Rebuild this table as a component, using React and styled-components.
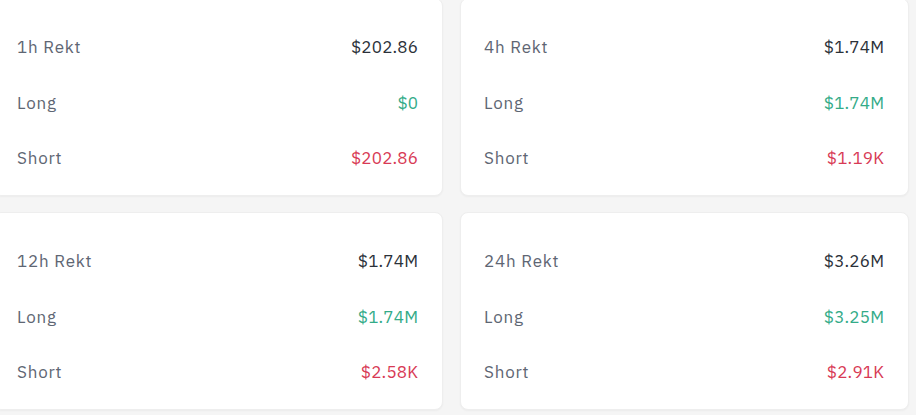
import React from "react";
import styled, { createGlobalStyle } from "styled-components";

const GlobalStyle = createGlobalStyle`
  html, body {
    margin: 0;
    padding: 0;
    background: #f5f5f5;
    font-family: "IBM Plex Sans", "Noto Sans", "Open Sans", Arial, sans-serif;
  }
`;

const stats = [
  { period: "1h", total: "$202.86", long: "$0", short: "$202.86" },
  { period: "4h", total: "$1.74M", long: "$1.74M", short: "$1.19K" },
  { period: "12h", total: "$1.74M", long: "$1.74M", short: "$2.58K" },
  { period: "24h", total: "$3.26M", long: "$3.25M", short: "$2.91K" },
];

export default function App() {
  return (
    <>
      <GlobalStyle />
      <Page>
        <Grid>
          {stats.map((s) => (
            <Card key={s.period}>
              <Row>
                <Label>{s.period} Rekt</Label>
                <Value>{s.total}</Value>
              </Row>
              <Row>
                <Label>Long</Label>
                <Value tone="up">{s.long}</Value>
              </Row>
              <Row>
                <Label>Short</Label>
                <Value tone="down">{s.short}</Value>
              </Row>
            </Card>
          ))}
        </Grid>
      </Page>
    </>
  );
}

const Page = styled.div`
  width: 916px;
  height: 415px;
  overflow: hidden;
  background: #f5f5f5;
`;

const Grid = styled.div`
  display: grid;
  grid-template-columns: 450px 449px;
  grid-auto-rows: 198px;
  column-gap: 17px;
  row-gap: 16px;
  margin: -2px 0 0 -7px;
`;

const Card = styled.div`
  box-sizing: border-box;
  display: flex;
  flex-direction: column;
  gap: 31.5px;
  padding: 36px 24px 27px 23px;
  background: #ffffff;
  border: 1px solid #eeeeee;
  border-radius: 8px;
  box-shadow: 0 1px 2px rgba(0, 0, 0, 0.04);
`;

const Row = styled.div`
  display: flex;
  justify-content: space-between;
  align-items: center;
  height: 24px;
  font-size: 17px;
  line-height: 24px;
`;

const Label = styled.span`
  color: #5e6673;
  letter-spacing: 0.8px;
`;

const Value = styled.span`
  letter-spacing: 0.2px;
  margin-right: -0.2px;
  color: ${(p) =>
    p.tone === "up" ? "#33ab88" : p.tone === "down" ? "#d83a55" : "#2b3139"};
`;
